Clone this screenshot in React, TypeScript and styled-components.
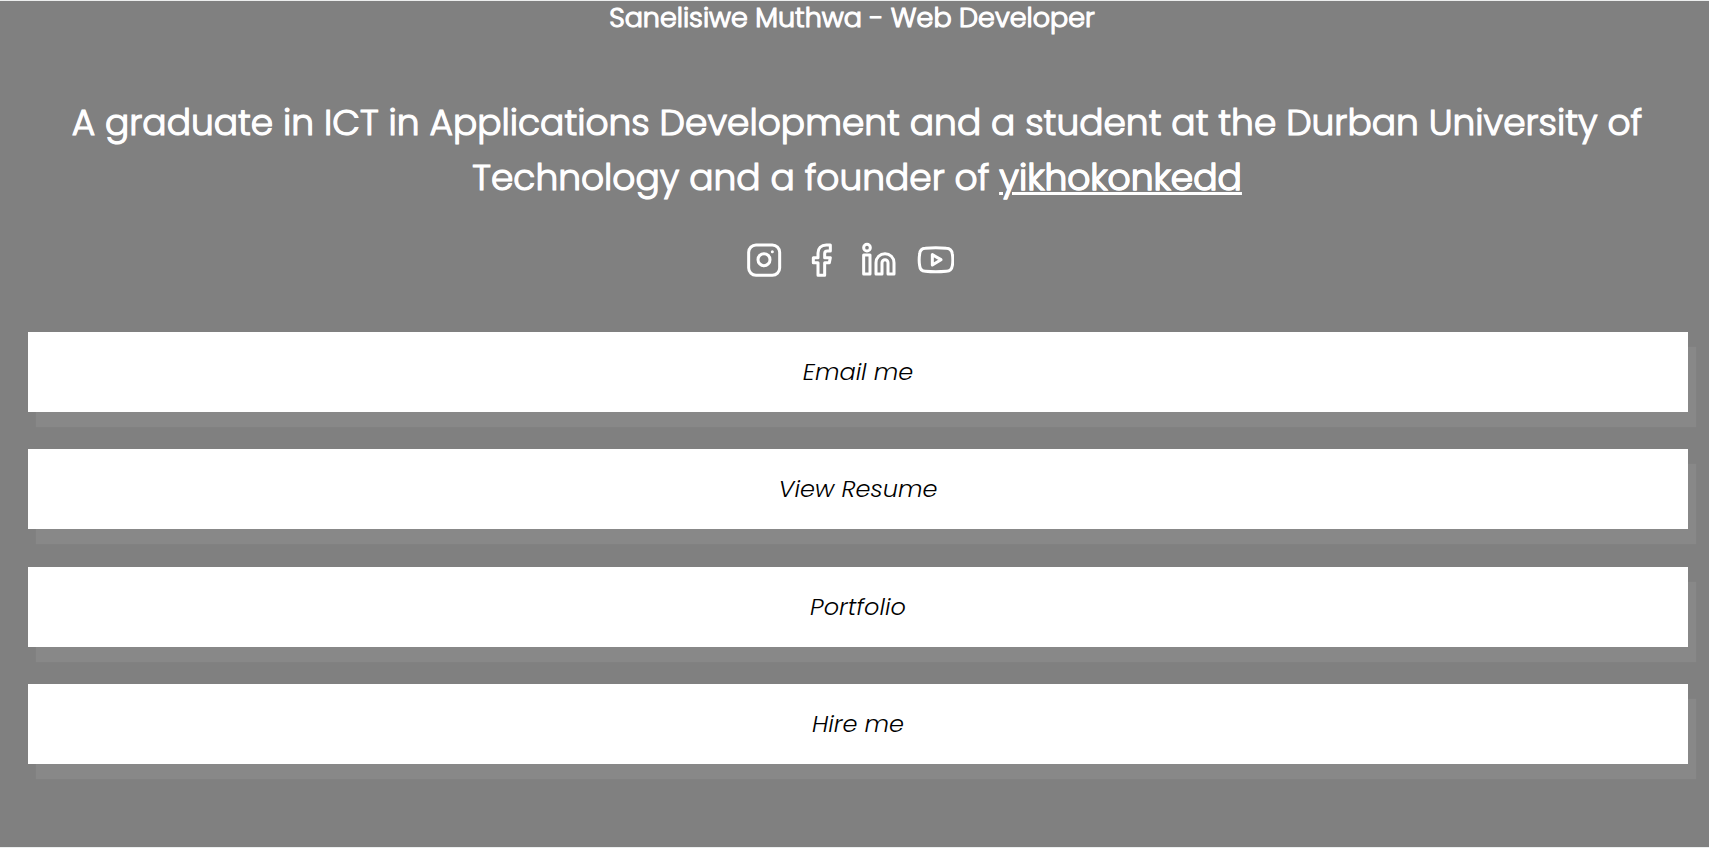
import type { ReactNode } from "react";
import styled, { createGlobalStyle } from "styled-components";

const GlobalStyle = createGlobalStyle`
  * { box-sizing: border-box; }
  body {
    margin: 0;
    background: #808080;
    color: #fff;
    font-family: Poppins, Inter, "Liberation Sans", sans-serif;
  }
`;

const Page = styled.main`
  min-height: 100vh;
  display: flex;
  flex-direction: column;
  border-top: 1px solid #eceeee;
  border-bottom: 1px solid #eceeee;
  padding: 0 21px 0 28px;
`;

const Title = styled.h1`
  margin: 0 12px 0 0;
  font-size: 27px;
  line-height: 34px;
  font-weight: 300;
  -webkit-text-stroke: 1px currentColor;
  text-shadow: 0 0 1px currentColor;
  text-align: center;
`;

const Intro = styled.p`
  margin: 60px 33px 0 31px;
  font-size: 36px;
  line-height: 55px;
  font-weight: 300;
  -webkit-text-stroke: 1px currentColor;
  text-shadow: 0 0 1px currentColor;
  text-align: center;
`;

const IntroLink = styled.a`
  color: inherit;
  text-decoration: underline;
  text-decoration-thickness: 3px;
  text-underline-offset: 2px;
`;

const Socials = styled.nav`
  display: flex;
  justify-content: center;
  gap: 19px;
  margin: 36px 18px 53px 0;
`;

const SocialLink = styled.a`
  display: block;
  color: inherit;
`;

const Icon = styled.svg`
  display: block;
  width: 38px;
  height: 38px;
  fill: none;
  stroke: currentColor;
  stroke-width: 9;
  stroke-linejoin: round;
  stroke-linecap: round;
`;

const Links = styled.nav`
  display: flex;
  flex-direction: column;
  justify-content: space-between;
  min-height: 432px;
`;

const CardLink = styled.a`
  display: block;
  padding: 20px;
  background: #fff;
  box-shadow: 8px 15px 1px #888;
  color: #000;
  font-size: 24px;
  line-height: 40px;
  font-style: italic;
  font-weight: 300;
  text-align: center;
  text-decoration: none;
`;

const socials: { name: string; drawing: ReactNode }[] = [
  {
    name: "Instagram",
    drawing: (
      <>
        <rect x="11" y="12" width="93" height="91" rx="22" />
        <circle cx="57" cy="56" r="18" />
        <circle cx="82" cy="32" r="4.5" fill="currentColor" stroke="none" />
      </>
    ),
  },
  {
    name: "Facebook",
    drawing: (
      <path d="M85 12H73C57 12 48 22 48 36V50H34V65H48V103H68V65H82L85 50H68V38C68 32 71 30 76 30H85Z" />
    ),
  },
  {
    name: "LinkedIn",
    drawing: (
      <>
        <circle cx="24" cy="20" r="10" />
        <rect x="14" y="42" width="19" height="57" />
        <path d="M51 99V65a27 27 0 0 1 54 0V99H87V65a9 9 0 0 0-18 0V99Z" />
      </>
    ),
  },
  {
    name: "YouTube",
    drawing: (
      <>
        <path d="M28 22Q59 19 91 22Q107 23 109 39Q112 57 109 74Q107 90 91 91Q59 94 28 91Q12 90 11 74Q8 57 11 39Q12 23 28 22Z" />
        <path d="M49 41V72L75 56Z" />
      </>
    ),
  },
];

const links = ["Email me", "View Resume", "Portfolio", "Hire me"];

export default function App() {
  return (
    <>
      <GlobalStyle />
      <Page>
        <Title>Sanelisiwe Muthwa - Web Developer</Title>
        <Intro>
          A graduate in ICT in Applications Development and a student at the Durban University of
          Technology and a founder of <IntroLink href="#yikhokonkedd">yikhokonkedd</IntroLink>
        </Intro>
        <Socials aria-label="Social media">
          {socials.map(({ name, drawing }) => (
            <SocialLink key={name} href={`#${name.toLowerCase()}`} aria-label={name}>
              <Icon viewBox="0 0 114 114" aria-hidden="true">
                {drawing}
              </Icon>
            </SocialLink>
          ))}
        </Socials>
        <Links aria-label="Contact and work">
          {links.map((label) => (
            <CardLink key={label} href={`#${label.toLowerCase().replace(" ", "-")}`}>
              {label}
            </CardLink>
          ))}
        </Links>
      </Page>
    </>
  );
}
